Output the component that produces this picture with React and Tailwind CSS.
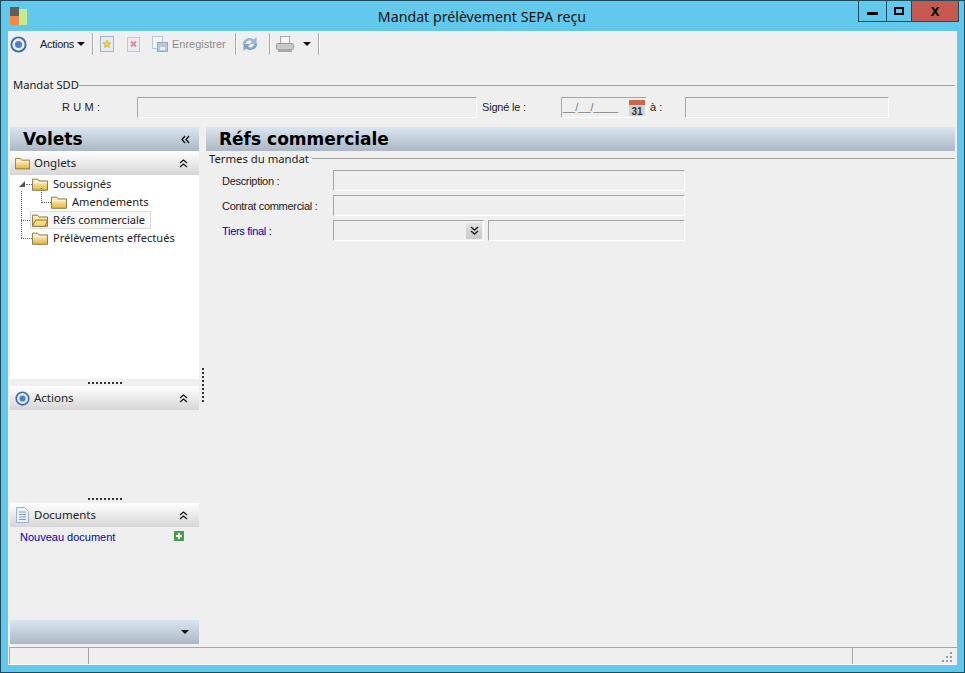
const FONT = "font-['Noto_Sans',sans-serif]";
const LIB = "font-['Liberation_Sans',sans-serif]";
const HEAD = "font-['DejaVu_Sans',sans-serif]";

const Folder = ({ open, w = 17, h = 13 }) => (
  <svg width={w} height={h} viewBox="0 0 18 14" className="shrink-0">
    <defs>
      <linearGradient id="fold" x1="0" y1="0" x2="0" y2="1">
        <stop offset="0" stopColor="#fffad6" />
        <stop offset="1" stopColor="#e6b53a" />
      </linearGradient>
    </defs>
    <path d="M.5 3V1h6L8 3h9.500v10.500H.5z" fill="url(#fold)" stroke="#7d6a38" strokeWidth="1" />
    {open && <path d="M.5 13.500l3.500-7h13.500l-3 7z" fill="#f8dc78" stroke="#8a7134" strokeWidth="1" />}
    {!open && <path d="M1.500 5h15" stroke="#fffbe6" strokeWidth="1" />}
  </svg>
);

const Target = ({ size = 16 }) => (
  <svg width={size} height={size} viewBox="0 0 16 16" className="shrink-0">
    <circle cx="8" cy="8" r="6.700" fill="#eaf0fa" stroke="#3d6db5" strokeWidth="1.800" />
    <circle cx="8" cy="8" r="3.300" fill="#4f7fc9" />
  </svg>
);

const DoubleUp = () => (
  <svg width="9" height="9" viewBox="0 0 9 9" className="shrink-0">
    <path d="M1 4l3.500-3L8 4M1 8l3.500-3L8 8" fill="none" stroke="#111" strokeWidth="1.300" />
  </svg>
);

const Sep = () => <div className="w-px h-[22px] bg-[#a9a9a9] border-r border-white box-content" />;

const Field = ({ className = "", children }) => (
  <div className={`h-[21px] border border-[#a5a5a5] border-b-white border-r-white bg-[#efefef] ${className}`}>
    {children}
  </div>
);

const PanelHead = ({ icon, label }) => (
  <div className="h-[24px] flex items-center bg-gradient-to-b from-white to-[#d6d6d6] pl-[5px] pr-[11px]">
    <span className="w-[19px] flex">{icon}</span>
    <span className="text-[11.500px] text-[#222] flex-1">{label}</span>
    <DoubleUp />
  </div>
);

const Dots = ({ h }) => (
  <div className={`${h} flex items-center justify-center`}>
    <div className="w-[34px] h-[2px] bg-[repeating-linear-gradient(90deg,#333_0,#333_2px,transparent_2px,transparent_4px)]" />
  </div>
);

const TreeRow = ({ indent, open, label, line }) => (
  <div className={`h-[18px] flex items-center ${indent}`}>
    {line}
    <Folder open={open} w={16} h={13} />
    <span className="ml-[5px] text-[11.100px] text-[#222] leading-[16px]">{label}</span>
  </div>
);

const Hdash = ({ w }) => <span className={`${w} border-t border-dotted border-[#666] shrink-0`} />;

export default function App() {
  return (
    <div className={`${FONT} relative w-[965px] h-[673px] bg-[#62c9ec] border border-[#1e4a5c] flex flex-col overflow-hidden`}>
      <div className="h-[30px] flex items-start pl-[9px] pt-[6px] shrink-0">
        <svg width="18" height="18" viewBox="0 0 18 18">
          <rect x="0" y="0" width="9" height="9" fill="#5f5f5f" />
          <rect x="0" y="9" width="9" height="9" fill="#f08a4b" />
          <rect x="9" y="2" width="8" height="16" fill="#c4ec8a" />
        </svg>
        <div className="flex-1 text-center text-[14.200px] leading-[20px] text-[#111] pr-[28px]">Mandat prélèvement SEPA reçu</div>
      </div>

      <div className="absolute top-0 right-[5px] h-[21px] flex border-b border-x border-[#1e4a5c]">
        <div className="w-[28px] flex items-center justify-center border-r border-[#1e4a5c]"><div className="w-[11px] h-[3px] bg-black mt-[4px]" /></div>
        <div className="w-[25px] flex items-center justify-center border-r border-[#1e4a5c]"><div className="w-[10px] h-[8px] border-2 border-black" /></div>
        <div className="w-[46px] flex items-center justify-center bg-[#c75a4e] text-black text-[13px] font-bold leading-none">X</div>
      </div>

      <div className="mx-[7px] mb-[7px] flex-1 bg-[#efefef] flex flex-col min-h-0">
        {/* toolbar */}
        <div className={`${LIB} h-[26px] flex items-center pl-[2px] shrink-0 text-[11px]`}>
          <Target size={17} />
          <span className="ml-[13px] text-[#222] tracking-[-0.3px]">Actions</span>
          <svg width="8" height="4" viewBox="0 0 8 4" className="ml-[3px]"><path d="M0 0h8L4 4z" fill="#111" /></svg>
          <span className="ml-[7px]"><Sep /></span>
          <svg width="15" height="16" viewBox="0 0 15 16" className="ml-[6px]">
            <rect x=".5" y=".5" width="13" height="15" fill="#e4ebf6" stroke="#a5b3c9" />
            <path d="M7 4l1.300 2.600 2.700.3-2 1.900.6 2.700L7 10.200l-2.600 1.300.6-2.700-2-1.900 2.700-.3z" fill="#efcf3a" stroke="#c9a62a" strokeWidth=".5" />
          </svg>
          <svg width="13" height="15" viewBox="0 0 13 15" className="ml-[12px]">
            <rect x=".5" y=".5" width="12" height="14" fill="#eceaf0" stroke="#c9c3d2" />
            <path d="M4 4.500l5 5M9 4.500l-5 5" stroke="#d98b90" strokeWidth="2" />
          </svg>
          <svg width="16" height="16" viewBox="0 0 16 16" className="ml-[12px]">
            <rect x=".5" y=".5" width="10" height="12" fill="#f1f4f9" stroke="#bcc8da" />
            <rect x="5.500" y="6.500" width="10" height="9" fill="#b9c7dd" stroke="#94a7c4" />
            <rect x="8" y="11" width="5" height="3" fill="#eef2f8" />
          </svg>
          <span className="ml-[4px] text-[#8c8c8c]">Enregistrer</span>
          <span className="ml-[9px]"><Sep /></span>
          <svg width="18" height="18" viewBox="0 0 18 18" className="ml-[4px]">
            <path d="M1.500 9.500C2 3.500 9 1 13 4.500L15.500 2v7h-7L11 6.500C8.500 4.500 5 6 4.500 9.500z" fill="#9db6d6" />
            <path d="M16.500 8.500C16 14.500 9 17 5 13.500L2.500 16V9h7L7 11.500c2.500 2 6 .5 6.500-3z" fill="#84a2c8" />
          </svg>
          <span className="ml-[10px]"><Sep /></span>
          <svg width="18" height="17" viewBox="0 0 18 17" className="ml-[5px]">
            <rect x="4.500" y=".5" width="9" height="7" fill="#f5f5f5" stroke="#a8a8a8" />
            <rect x=".5" y="7.500" width="17" height="6" rx="1" fill="#c9c9c9" stroke="#9a9a9a" />
            <rect x="2" y="13" width="14" height="3" fill="#a8a8a8" />
          </svg>
          <svg width="8" height="4" viewBox="0 0 8 4" className="ml-[9px]"><path d="M0 0h8L4 4z" fill="#111" /></svg>
          <span className="ml-[7px]"><Sep /></span>
        </div>

        {/* Mandat */}
        <div className="mt-[20px] ml-[5px] mr-[2px] flex items-center h-[16px] shrink-0">
          <span className="text-[11.200px] text-[#222]">Mandat SDD</span>
          <div className="flex-1 h-px bg-[#a0a0a0]" />
        </div>
        <div className={`${LIB} mt-[4px] flex items-start h-[21px] shrink-0 text-[11px] text-[#222]`}>
          <span className="ml-[54px] w-[75px] leading-[21px] tracking-[0.15px]">R U M :</span>
          <Field className="w-[340px]" />
          <span className="ml-[5px] w-[79px] leading-[21px] tracking-[-0.2px]">Signé le :</span>
          <Field className="w-[86px] flex items-center pl-[1px] justify-between pr-[1px] text-[#777]">
            <span>__/__/____</span>
            <svg width="16" height="16" viewBox="0 0 16 16" className="shrink-0">
              <rect width="16" height="16" rx="1" fill="#d4d4d4" />
              <rect width="16" height="5" fill="#c9684a" />
              <text x="8" y="14.500" textAnchor="middle" fontSize="10" fontWeight="bold" fill="#333" fontFamily="Liberation Sans">31</text>
            </svg>
          </Field>
          <span className="ml-[3px] w-[35px] leading-[21px]">à :</span>
          <Field className="w-[204px]" />
        </div>

        {/* body */}
        <div className="mt-[9px] flex-1 flex min-h-0">
          <div className="ml-[2px] w-[189px] flex flex-col shrink-0">
            <div className="h-[24px] flex items-center justify-between pl-[13px] pr-[9px] bg-gradient-to-b from-[#dbe6f1] to-[#abb7c4]">
              <span className={`${HEAD} text-[17px] font-bold text-black leading-none`}>Volets</span>
              <svg width="9" height="9" viewBox="0 0 9 9"><path d="M4 1L1 4.500 4 8M8 1L5 4.500 8 8" fill="none" stroke="#111" strokeWidth="1.300" /></svg>
            </div>
            <PanelHead icon={<Folder w={15} h={13} />} label="Onglets" />
            <div className="relative h-[204px] bg-white flex flex-col">
              <span className="absolute left-[11px] top-[16px] h-[47px] border-l border-dotted border-[#666]" />
              <span className="absolute left-[31px] top-[13px] h-[15px] border-l border-dotted border-[#666]" />
              <div className="h-[18px] flex items-center pl-[9px]">
                <svg width="6" height="6" viewBox="0 0 6 6"><path d="M6 0v6H0z" fill="#555" /></svg>
                <Hdash w="w-[6px] ml-[1px]" />
                <Folder w={16} h={13} />
                <span className="ml-[5px] text-[11.100px] text-[#222]">Soussignés</span>
              </div>
              <TreeRow indent="pl-[31px]" label="Amendements" line={<Hdash w="w-[10px]" />} />
              <div className="h-[18px] flex items-center pl-[11px]">
                <Hdash w="w-[9px]" />
                <div className="w-[121px] h-[18px] flex items-center pl-[1px] border border-[#dcdcdc] bg-[#f7f7f7]">
                  <Folder open w={16} h={13} />
                  <span className="ml-[5px] text-[11.100px] text-[#222] leading-[16px]">Réfs commerciale</span>
                </div>
              </div>
              <TreeRow indent="pl-[11px]" label="Prélèvements effectués" line={<Hdash w="w-[11px]" />} />
            </div>
            <Dots h="h-[7px]" />
            <PanelHead icon={<Target size={15} />} label="Actions" />
            <div className="h-[85px]" />
            <Dots h="h-[8px]" />
            <PanelHead
              icon={
                <svg width="13" height="16" viewBox="0 0 13 16" className="ml-[1px]">
                  <path d="M.5.5h8l4 4v11H.5z" fill="#eef3fb" stroke="#9cb2d6" />
                  <path d="M3 5h7M3 7.500h7M3 10h7M3 12.500h7" stroke="#7c9ad0" />
                </svg>
              }
              label="Documents"
            />
            <div className="h-[93px] flex items-start justify-between pl-[10px] pr-[15px] pt-[1px]">
              <span className={`${LIB} text-[11px] leading-[18px] text-[#0000c0]`}>Nouveau document</span>
              <svg width="10" height="10" viewBox="0 0 10 10" className="mt-[3px]">
                <rect width="10" height="10" fill="#4a9d4a" />
                <path d="M5 2v6M2 5h6" stroke="#fff" strokeWidth="2" />
              </svg>
            </div>
            <div className="h-[24px] flex items-center justify-end pr-[10px] bg-gradient-to-b from-[#dbe6f1] to-[#abb7c4]">
              <svg width="8" height="4" viewBox="0 0 8 4"><path d="M0 0h8L4 4z" fill="#111" /></svg>
            </div>
          </div>

          <div className="w-[7px] shrink-0 flex justify-center pt-[241px]">
            <div className="w-[2px] h-[36px] bg-[repeating-linear-gradient(180deg,#333_0,#333_2px,transparent_2px,transparent_4px)]" />
          </div>

          <div className="flex-1 flex flex-col mr-[2px] min-w-0">
            <div className="h-[24px] flex items-center pl-[13px] bg-gradient-to-b from-[#dbe6f1] to-[#abb7c4]">
              <span className={`${HEAD} text-[17px] font-bold text-black leading-none`}>Réfs commerciale</span>
            </div>
            <div className="flex items-center h-[15px] pl-[3px]">
              <span className="text-[11.300px] text-[#222] leading-[15px]">Termes du mandat</span>
              <div className="ml-[3px] flex-1 h-px bg-[#a0a0a0]" />
            </div>
            <div className={`${LIB} ml-[16px] mt-[4px] text-[11px] tracking-[-0.3px] text-[#222] flex flex-col gap-[4px]`}>
              <div className="flex h-[21px]">
                <span className="w-[111px] leading-[23px]">Description :</span>
                <Field className="w-[352px]" />
              </div>
              <div className="flex h-[21px]">
                <span className="w-[111px] leading-[23px]">Contrat commercial :</span>
                <Field className="w-[352px]" />
              </div>
              <div className="flex h-[21px]">
                <span className="w-[111px] leading-[23px] !text-[#0000c0]">Tiers final :</span>
                <Field className="w-[151px] flex justify-end items-center pr-[1px]">
                  <div className="w-[16px] h-[16px] bg-gradient-to-b from-[#e4e4e4] to-[#c8c8c8] rounded-[2px] flex items-center justify-center">
                    <svg width="9" height="9" viewBox="0 0 9 9"><path d="M1 1l3.500 3L8 1M1 5l3.500 3L8 5" fill="none" stroke="#222" strokeWidth="1.500" /></svg>
                  </div>
                </Field>
                <Field className="ml-[4px] w-[197px]" />
              </div>
            </div>
          </div>
        </div>

        {/* status */}
        <div className="mt-[3px] h-[18px] border-t border-t-[#a5a5a5] border-b border-b-white flex shrink-0 ml-[1px]">
          <div className="w-[80px] border-l border-r border-[#a5a5a5]" />
          <div className="w-[764px] border-r border-[#a5a5a5]" />
          <div className="flex-1 flex items-end justify-end pr-[4px] pb-[1px]">
            <svg width="11" height="11" viewBox="0 0 11 11">
              <path d="M8 0h2v2H8zM4 4h2v2H4zM8 4h2v2H8zM0 8h2v2H0zM4 8h2v2H4zM8 8h2v2H8z" fill="#9a9a9a" />
            </svg>
          </div>
        </div>
      </div>
    </div>
  );
}
